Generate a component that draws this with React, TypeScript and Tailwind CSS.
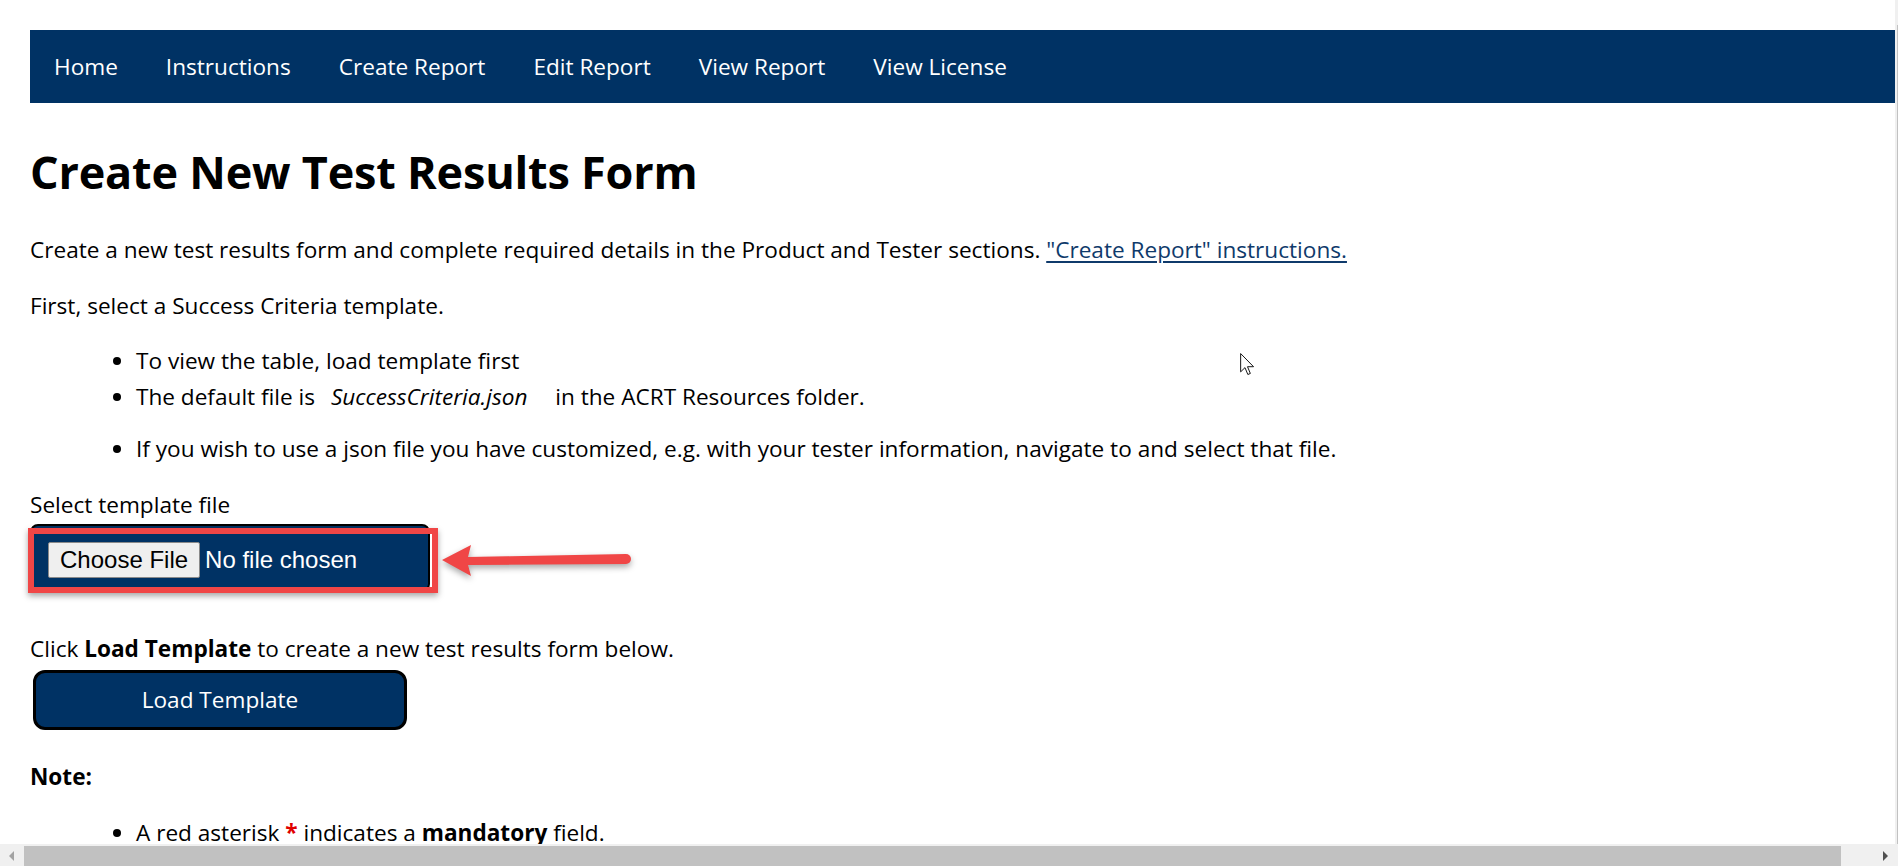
const navLinks = ["Home", "Instructions", "Create Report", "Edit Report", "View Report", "View License"];

export default function App() {
  return (
    <div className="flex h-[866px] w-[1898px] flex-col overflow-hidden bg-white font-['Open_Sans',sans-serif] text-[22.6px] leading-[36px] text-black">
      <div className="flex min-h-0 flex-1">
        {/* page */}
        <div className="relative min-w-0 flex-1 overflow-hidden pl-[30px] pt-[30px]">
          <nav className="flex h-[73px] items-center bg-[#003264]">
            {navLinks.map((l) => (
              <a key={l} href="#" className="px-[24px] text-[22.6px] text-white">
                {l}
              </a>
            ))}
          </nav>

          <h1 className="mt-[43px] text-[45px] font-bold leading-[52px] tracking-[-0.2px]">Create New Test Results Form</h1>

          <p className="mt-[34px]">
            Create a new test results form and complete required details in the Product and Tester sections.{" "}
            <a href="#" className="text-[#0f3a6b] underline underline-offset-[3px]">
              "Create Report" instructions.
            </a>
          </p>
          <p className="mt-[20px]">First, select a Success Criteria template.</p>

          <ul className="mt-[19px] list-disc pl-[106px]">
            <li>To view the table, load template first</li>
            <li>
              The default file is <em className="ml-[10px] mr-[22px]">SuccessCriteria.json</em> in the ACRT Resources folder.
            </li>
            <li className="mt-[16px]">
              If you wish to use a json file you have customized, e.g. with your tester information, navigate to and select that file.
            </li>
          </ul>

          <label className="mt-[20px] block">Select template file</label>

          {/* file input + annotation */}
          <div className="relative mt-[1px] w-[400px]">
            <div className="flex h-[68px] items-start gap-[5px] rounded-[8px] border-2 border-black bg-[#003264] pl-[16px] pt-[16px] font-['Liberation_Sans',Arial,sans-serif] text-[24px] leading-[28px]">
              <button className="h-[36px] rounded-[2px] border border-[#8a8a8a] bg-[#efefef] px-[11px] text-black">Choose File</button>
              <span className="pt-[4px] text-white">No file chosen</span>
            </div>
            <div className="absolute left-[-2px] top-[4px] h-[65px] w-[410px] border-[6px] border-[#f04646] shadow-[0_3px_6px_rgba(0,0,0,0.35)]" />
            <svg
              className="absolute left-[410px] top-[18px] drop-shadow-[0_3px_3px_rgba(0,0,0,0.35)]"
              width="194"
              height="38"
              viewBox="0 0 194 38"
            >
              <path d="M2 18 L31 3 L28 15 L186 12 L186 22 L28 23 L31 34 Z" fill="#f04646" />
              <circle cx="186" cy="17" r="5" fill="#f04646" />
            </svg>
          </div>

          <p className="mt-[39px]">
            Click <strong>Load Template</strong> to create a new test results form below.
          </p>
          <button className="ml-[3px] mt-[3px] h-[60px] w-[374px] rounded-[12px] border-[3px] border-black bg-[#003264] text-[22.6px] text-white">
            Load Template
          </button>

          <p className="mt-[29px] font-bold">Note:</p>
          <ul className="mt-[20px] list-disc pl-[106px]">
            <li>
              A red asterisk <span className="font-bold text-[#e00000]">*</span> indicates a <strong>mandatory</strong> field.
            </li>
          </ul>

          {/* mouse pointer */}
          <svg className="absolute left-[1240px] top-[353px]" width="15" height="24" viewBox="0 0 13 21">
            <path d="M0.5 0.5 L0.5 16.5 L4.3 12.8 L6.8 18.8 L9 17.9 L6.5 12 L11.8 12 Z" fill="white" stroke="black" strokeWidth="0.8" />
          </svg>
        </div>

        {/* vertical scrollbar sliver */}
        <div className="flex w-[3px] flex-col items-end bg-[#f0f0f0]">
          <div className="h-[25px]" />
          <div className="w-[1px] flex-1 bg-[#c1c1c1]" />
        </div>
      </div>

      {/* horizontal scrollbar */}
      <div className="flex h-[22px] items-stretch bg-[#f0f0f0] pt-[2px]">
        <div className="flex w-[24px] items-center justify-center">
          <svg width="6" height="10" viewBox="0 0 6 10">
            <path d="M5 0 L0 5 L5 10 Z" fill="#a3a3a3" />
          </svg>
        </div>
        <div className="w-[1817px] bg-[#c1c1c1]" />
        <div className="flex flex-1 items-center justify-end pr-[10px]">
          <svg width="6" height="10" viewBox="0 0 6 10">
            <path d="M1 0 L6 5 L1 10 Z" fill="#505050" />
          </svg>
        </div>
      </div>
    </div>
  );
}
